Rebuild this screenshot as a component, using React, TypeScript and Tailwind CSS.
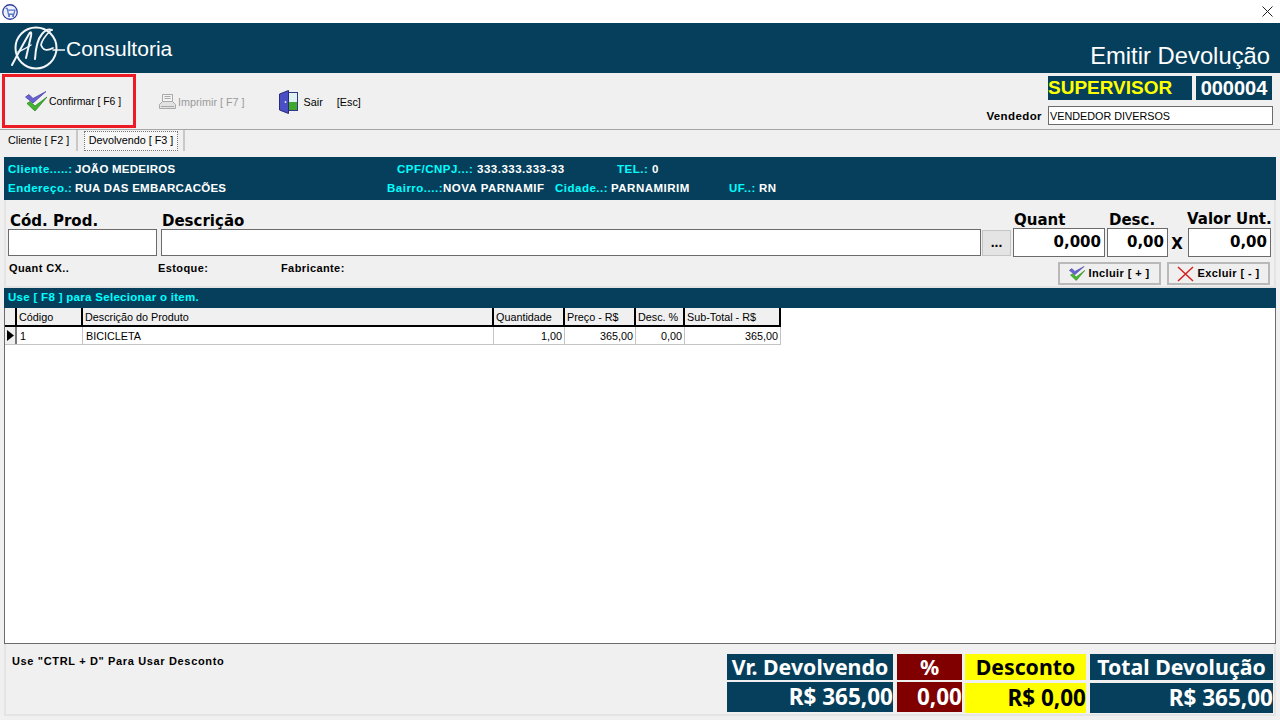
import React from "react";

const sans = "font-['Liberation_Sans',Arial,sans-serif]";
const bold = "font-['DejaVu_Sans',Verdana,sans-serif] font-bold";
const noto = "font-['Noto_Sans',Arial,sans-serif] font-bold";

function CartIcon() {
  return (
    <svg width="16" height="16" viewBox="0 0 15 15" fill="none">
      <circle cx="7.5" cy="7.5" r="6.8" fill="#eef1fb" stroke="#2f3f9e" strokeWidth="1.2" />
      <path d="M3.3 4.2h1.5l1.3 5.4h5l1-3.9H5.2" stroke="#5a78c8" strokeWidth="1.2" />
      <circle cx="6.6" cy="11.2" r="0.9" fill="#3f55b5" />
      <circle cx="10.4" cy="11.2" r="0.9" fill="#3f55b5" />
    </svg>
  );
}

function Logo() {
  return (
    <svg width="54" height="46" viewBox="0 0 54 46" fill="none" stroke="#f2f6f8" strokeLinecap="round">
      <circle cx="25" cy="23" r="20.5" strokeWidth="2" />
      <path d="M1 40 Q11 21 18 9 Q21 5 20 11 L15 33" strokeWidth="2" />
      <path d="M7 27 Q14 24 20 20" strokeWidth="1.5" />
      <path d="M24 34 Q25 16 31 9 Q36 3 41 5" strokeWidth="2" />
      <path d="M40 5 Q31 14 30 20 Q33 28 42 23" strokeWidth="1.7" />
      <path d="M42 25 L54 25" strokeWidth="1.5" />
    </svg>
  );
}

function DoubleCheck({ size = 22 }: { size?: number }) {
  return (
    <svg width={size} height={(size * 20) / 22} viewBox="0 0 22 20" fill="none">
      <path d="M0.500 6L4 3.500 8 7.500 21 0.500 8 12z" fill="#6a62d4" stroke="#3d3a9c" strokeWidth="0.7" />
      <path d="M2 12.500L5 10.500 10 15 22 6 10 20z" fill="#43b52f" stroke="#1f7a18" strokeWidth="0.7" />
    </svg>
  );
}

function PrinterIcon() {
  return (
    <svg width="19" height="18" viewBox="0 0 19 18" fill="none" stroke="#a9a9a9">
      <path d="M4.500 1.500h10v7h-10z" fill="#f4f4f4" />
      <path d="M6.500 3.500h6M6.500 5.500h6" />
      <path d="M1.500 11.500l3-3h10l3 3v4h-16z" fill="#e2e2e2" />
      <path d="M3 13.500h13" />
    </svg>
  );
}

function DoorIcon() {
  return (
    <svg width="20" height="24" viewBox="0 0 20 24" fill="none">
      <rect x="7.500" y="2.500" width="11" height="18" fill="#dff2f2" stroke="#34348a" />
      <rect x="9" y="12" width="9" height="8" fill="#3fa92e" />
      <path d="M0.500 4L9.500 0.500V23.500L0.500 20z" fill="#4a4fc4" stroke="#2a2a7a" />
      <circle cx="6.500" cy="12" r="0.9" fill="#e8e8ff" />
    </svg>
  );
}

function RedX() {
  return (
    <svg width="17" height="16" viewBox="0 0 17 16" fill="none" stroke="#d81f1f" strokeWidth="1.500">
      <path d="M1 1l15 14M16 1L1 15" />
    </svg>
  );
}

function Field({ w, h, right }: { w: string; h: string; right?: string }) {
  return (
    <div className={`${w} ${h} shrink-0 border border-[#6b6b6b] bg-white flex items-center justify-end pr-[3px] ${bold} text-[15px] text-black`}>
      {right}
    </div>
  );
}

function Cell({ w, cyan, tight, label }: { w: string; cyan?: boolean; tight?: boolean; label: string }) {
  return (
    <span className={`${w} shrink-0 whitespace-nowrap overflow-hidden ${tight ? "tracking-[0.25px]" : "tracking-[0.5px]"} ${cyan ? "text-[#00ffff]" : "text-white"}`}>
      {label}
    </span>
  );
}

function Th({ w, label }: { w: string; label: string }) {
  return (
    <div className={`${w} shrink-0 h-full border-r-2 border-black bg-[#f0f0f0] pl-[2px] pt-[2px] flex items-center whitespace-nowrap`}>
      {label}
    </div>
  );
}

function Td({ w, label, right }: { w: string; label: string; right?: boolean }) {
  return (
    <div className={`${w} shrink-0 h-full border-r border-[#c4c4c4] pt-[2px] flex items-center whitespace-nowrap ${right ? "justify-end pr-[2px]" : "pl-[3px]"}`}>
      {label}
    </div>
  );
}

function Total({ w, title, value, bg, fg, gap }: { w: string; title: string; value: string; bg: string; fg: string; gap: string }) {
  return (
    <div className={`${w} shrink-0 flex flex-col ${fg} ${noto}`}>
      <div className={`${bg} h-[26px] flex items-center justify-center text-[21.3px] whitespace-nowrap`}>{title}</div>
      <div className={`${bg} ${gap} h-[30px] flex items-center justify-end text-[22.5px] whitespace-nowrap`}>{value}</div>
    </div>
  );
}

function ActionButton({ icon, label, w }: { icon: React.ReactNode; label: string; w: string }) {
  return (
    <div className={`${w} h-[23px] border-2 border-[#b9b9b9] bg-[#efefef] flex items-center justify-center gap-[3px] ${sans} font-bold text-[11px] tracking-[0.4px] whitespace-nowrap`}>
      {icon}
      {label}
    </div>
  );
}

export default function App() {
  return (
    <div className={`w-[1280px] h-[720px] overflow-hidden bg-[#f0f0f0] flex flex-col text-black text-[10.8px] ${sans}`}>
      {/* Title bar */}
      <div className="h-[23px] shrink-0 bg-white flex items-center justify-between pl-[2px] pr-[7px]">
        <CartIcon />
        <svg width="11" height="11" viewBox="0 0 11 11" stroke="#222" fill="none" strokeWidth="1">
          <path d="M0.500 0.500l10 10M10.500 0.500l-10 10" />
        </svg>
      </div>

      {/* Header */}
      <div className="h-[50px] shrink-0 bg-[#063f5c] text-white flex justify-between pr-[10px]">
        <div className="flex items-center pl-[11px]">
          <Logo />
          <span className="text-[21px] ml-px pt-[2px]">Consultoria</span>
        </div>
        <span className="self-end text-[23.8px] leading-[32px] mb-[1px]">Emitir Devolução</span>
      </div>

      {/* Toolbar */}
      <div className="h-[57px] shrink-0 border-b border-[#a6a6a6] flex pl-[2px] pt-px">
        <div className="w-[134px] h-[54px] border-[3px] border-[#ed1c24] flex items-center pl-[20px] gap-[2px] shrink-0 whitespace-nowrap">
          <DoubleCheck />
          <span className="text-[10.4px] pt-px">Confirmar [ F6 ]</span>
        </div>
        <div className="ml-[22px] flex items-center gap-px text-[#9a9a9a] whitespace-nowrap">
          <PrinterIcon />
          <span className="pt-px">Imprimir [ F7 ]</span>
        </div>
        <div className="ml-[34px] flex items-center whitespace-nowrap">
          <DoorIcon />
          <span className="ml-[5px] pt-px">Sair</span>
          <span className="ml-[14px] pt-px">[Esc]</span>
        </div>
        <div className="ml-auto pr-[7px] pt-[2px] flex flex-col items-end">
          <div className="flex gap-[4px] h-[24px] mr-px">
            <div className="w-[144px] bg-[#063f5c] text-[#ffff00] text-[19px] font-bold flex items-center">SUPERVISOR</div>
            <div className="w-[76px] bg-[#063f5c] text-white text-[20px] font-bold flex items-center justify-center">000004</div>
          </div>
          <div className="flex items-center mt-[6px]">
            <span className="font-bold text-[11.5px] tracking-[0.4px] mr-[6px] pt-[2px]">Vendedor</span>
            <div className="w-[225px] h-[19px] border border-[#6b6b6b] bg-white flex items-center pl-px">VENDEDOR DIVERSOS</div>
          </div>
        </div>
      </div>

      {/* Tabs */}
      <div className="h-[21px] shrink-0 flex items-stretch pl-[8px] whitespace-nowrap">
        <div className="w-[70px] flex items-center border-r-2 border-[#c8c8c8]">Cliente [ F2 ]</div>
        <div className="ml-[6px] w-[101px] border-r-2 border-[#c8c8c8] flex items-center pr-[5px]">
          <div className="w-full h-[20px] border border-dotted border-[#777] bg-[#f7f7f7] flex items-center justify-center">Devolvendo [ F3 ]</div>
        </div>
      </div>

      <div className="h-[6px] shrink-0" />

      {/* Content */}
      <div className="mx-[4px] flex flex-col flex-1 min-h-0">
        {/* Customer panel */}
        <div className="h-[43px] shrink-0 bg-[#063f5c] pl-[4px] flex flex-col justify-center gap-[6px] font-bold text-[11.5px] leading-[13px]">
          <div className="flex">
            <Cell w="w-[67px]" cyan label="Cliente.....:" />
            <Cell w="w-[322px]" tight label="JOÃO MEDEIROS" />
            <Cell w="w-[80px]" cyan label="CPF/CNPJ...:" />
            <Cell w="w-[140px]" label="333.333.333-33" />
            <Cell w="w-[35px]" cyan label="TEL.:" />
            <Cell w="w-[30px]" label="0" />
          </div>
          <div className="flex">
            <Cell w="w-[67px]" cyan label="Endereço.:" />
            <Cell w="w-[312px]" tight label="RUA DAS EMBARCACÕES" />
            <Cell w="w-[56px]" cyan label="Bairro....:" />
            <Cell w="w-[112px]" label="NOVA PARNAMIF" />
            <Cell w="w-[56px]" cyan label="Cidade..:" />
            <Cell w="w-[118px]" label="PARNAMIRIM" />
            <Cell w="w-[30px]" cyan label="UF..:" />
            <Cell w="w-[30px]" label="RN" />
          </div>
        </div>

        {/* Product form */}
        <div className="h-[88px] shrink-0 border-b-2 border-x-2 border-[#e4e4e4] pl-[2px] pt-[14px] flex flex-col">
          <div className={`flex h-[14px] items-center ${bold} text-[15px] whitespace-nowrap`}>
            <span className="w-[154px] pl-[2px]">Cód. Prod.</span>
            <span className="flex-1">Descrição</span>
            <span className="w-[95px] pb-[2px]">Quant</span>
            <span className="w-[78px] pb-[2px]">Desc.</span>
            <span className="w-[87px] pb-[3px]">Valor Unt.</span>
          </div>
          <div className="flex items-center h-[29px]">
            <Field w="w-[149px]" h="h-[27px]" />
            <div className="w-[4px] shrink-0" />
            <Field w="w-[820px]" h="h-[27px]" />
            <div className="ml-px w-[29px] h-[26px] shrink-0 bg-[#e4e4e4] border border-[#c4c4c4] flex items-center justify-center font-bold text-[14px]">...</div>
            <div className="w-[2px] shrink-0" />
            <Field w="w-[92px]" h="h-[29px]" right="0,000" />
            <div className="w-[2px] shrink-0" />
            <Field w="w-[61px]" h="h-[29px]" right="0,00" />
            <span className={`w-[20px] shrink-0 pr-[2px] text-center text-[15px] pt-[3px] ${bold}`}>X</span>
            <Field w="w-[83px]" h="h-[29px]" right="0,00" />
          </div>
          <div className="flex items-start mt-[5px]">
            <div className="flex items-center h-[12px] font-bold text-[11px] tracking-[0.4px] whitespace-nowrap">
              <span className="w-[150px] pl-px">Quant CX..</span>
              <span className="w-[123px]">Estoque:</span>
              <span>Fabricante:</span>
            </div>
            <div className="ml-auto flex gap-[6px] pr-[4px]">
              <ActionButton w="w-[103px]" icon={<DoubleCheck size={16} />} label="Incluir [ + ]" />
              <ActionButton w="w-[103px]" icon={<RedX />} label="Excluir [ - ]" />
            </div>
          </div>
        </div>

        {/* Grid bar */}
        <div className="h-[20px] shrink-0 bg-[#063f5c] text-[#00ffff] font-bold text-[11.5px] tracking-[0.3px] pl-[4px] flex items-center">
          Use [ F8 ] para Selecionar o item.
        </div>

        {/* Grid */}
        <div className="h-[336px] shrink-0 bg-white border border-t-0 border-[#6b6b6b] flex flex-col">
          <div className="flex h-[19px] border-b-2 border-black w-[776px]">
            <div className="w-[12px] shrink-0 border-r-2 border-black bg-[#f0f0f0]" />
            <Th w="w-[66px]" label="Código" />
            <Th w="w-[411px]" label="Descrição do Produto" />
            <Th w="w-[71px]" label="Quantidade" />
            <Th w="w-[71px]" label="Preço - R$" />
            <Th w="w-[49px]" label="Desc. %" />
            <Th w="w-[96px]" label="Sub-Total - R$" />
          </div>
          <div className="flex h-[18px] border-b border-[#c4c4c4] w-[776px]">
            <div className="w-[12px] shrink-0 bg-[#f0f0f0] border-r-2 border-[#777] flex items-center justify-center">
              <svg width="7" height="11" viewBox="0 0 7 11"><path d="M0 0l7 5.500L0 11z" fill="#000" /></svg>
            </div>
            <Td w="w-[66px]" label="1" />
            <Td w="w-[411px]" label="BICICLETA" />
            <Td w="w-[71px]" label="1,00" right />
            <Td w="w-[71px]" label="365,00" right />
            <Td w="w-[49px]" label="0,00" right />
            <Td w="w-[96px]" label="365,00" right />
          </div>
        </div>

        {/* Footer */}
        <div className="h-[72px] shrink-0 border-x-2 border-b-2 border-[#e4e4e4] flex">
          <span className="ml-[6px] mt-[9px] font-bold text-[11px] tracking-[0.65px] whitespace-nowrap">Use "CTRL + D" Para Usar Desconto</span>
          <div className="ml-auto flex pt-[10px] pr-px">
            <Total w="w-[166px]" title="Vr. Devolvendo" value="R$ 365,00" bg="bg-[#063f5c]" fg="text-white" gap="mt-[2px]" />
            <Total w="w-[65px] ml-[4px]" title="%" value="0,00" bg="bg-[#800000]" fg="text-white" gap="mt-[2px]" />
            <Total w="w-[121px] ml-[3px]" title="Desconto" value="R$ 0,00" bg="bg-[#ffff00]" fg="text-black" gap="mt-[3px]" />
            <Total w="w-[183px] ml-[4px]" title="Total Devolução" value="R$ 365,00" bg="bg-[#063f5c]" fg="text-white" gap="mt-[3px]" />
          </div>
        </div>
      </div>
    </div>
  );
}
